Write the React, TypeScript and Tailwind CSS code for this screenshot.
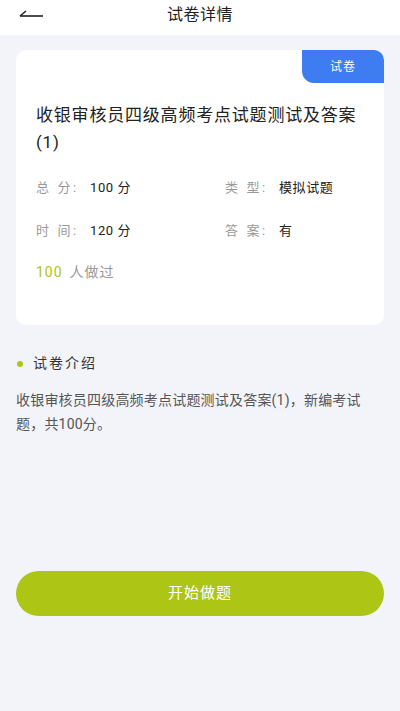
const font = "font-['Roboto','Noto_Sans_CJK_SC',sans-serif]";

function InfoItem({ label, value }: { label: string; value: string }) {
  return (
    <div className="flex items-center text-[13px]">
      <span className="w-[54px] text-[#999999] tracking-[0.2em]">{label}</span>
      <span className="text-[#222222] tracking-[0.6px]">{value}</span>
    </div>
  );
}

export default function App() {
  return (
    <div className={`${font} w-[400px] h-[711px] bg-[#f3f4f9] flex flex-col`}>
      <div className="h-[35px] bg-white flex items-center relative">
        <svg className="absolute left-[18px] top-[8px]" width="26" height="12" viewBox="0 0 26 12">
          <path d="M2 8 L25 8" stroke="#222" strokeWidth="1.6" fill="none" />
          <path d="M2 8 L8 3" stroke="#222" strokeWidth="1.6" fill="none" />
        </svg>
        <div className="flex-1 text-center text-[16px] tracking-[0.5px] text-[#222] -mt-[5px]">试卷详情</div>
      </div>

      <div className="px-4 pt-[15px]">
        <div className="bg-white rounded-[10px] h-[275px] relative pl-5 pr-[14px] pt-[52px]">
          <div className="absolute right-0 top-0 w-[82px] h-[33px] bg-[#3e7cf1] rounded-tr-[10px] rounded-bl-[12px] flex items-center justify-center text-white text-[12px] tracking-[1px]">
            试卷
          </div>
          <div className="text-[17px] leading-[27px] tracking-[0.8px] text-[#222]">收银审核员四级高频考点试题测试及答案(1)</div>
          <div className="grid grid-cols-2 mt-[22px] gap-y-[23px]">
            <InfoItem label="总 分:" value="100 分" />
            <div className="pl-[22px]"><InfoItem label="类 型:" value="模拟试题" /></div>
            <InfoItem label="时 间:" value="120 分" />
            <div className="pl-[22px]"><InfoItem label="答 案:" value="有" /></div>
          </div>
          <div className="mt-[22px] text-[14px] text-[#999] tracking-[1px]">
            <span className="text-[#aec416] mr-[7px]">100</span>人做过
          </div>
        </div>
      </div>

      <div className="px-4 mt-[28px]">
        <div className="flex items-center text-[14px] tracking-[2px] text-[#333]">
          <span className="w-[6px] h-[6px] rounded-full bg-[#aec416] ml-[1px] mr-[10px]" />
          试卷介绍
        </div>
        <div className="mt-[14px] pr-[13px] text-[14px] leading-[24px] tracking-[0.2px] text-[#555]">
          收银审核员四级高频考点试题测试及答案(1)，新编考试题，共100分。
        </div>
      </div>

      <div className="px-4 mt-[135px]">
        <button className="w-full h-[45px] rounded-full bg-[#adc515] text-white text-[15px] tracking-[1px]">开始做题</button>
      </div>
    </div>
  );
}
